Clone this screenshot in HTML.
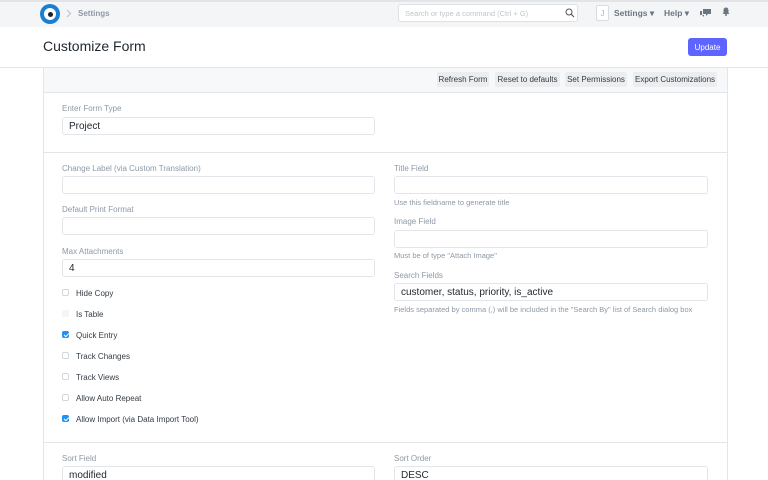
<!DOCTYPE html>
<html><head><meta charset="utf-8"><style>
*{box-sizing:border-box;margin:0;padding:0}
html,body{width:768px;height:480px;overflow:hidden}
body{background:#fff;font-family:"Liberation Sans",sans-serif;position:relative;color:#333c44}
.a{position:absolute}
.nav{left:0;top:0;width:768px;height:27px;background:#f4f5f7;border-top:2px solid #e2e4e7}
.lbl{position:absolute;font-size:8px;color:#8d99a6}
.inp{position:absolute;height:18px;border:1px solid #e2e6ea;border-radius:3px;background:#fff;font-size:10px;color:#1f272e;padding:3px 0 0 6px}
.help{position:absolute;font-size:7.5px;color:#8d99a6}
.cb{position:absolute;left:62px;width:7px;height:7px;border:1px solid #d1d8dd;border-radius:2px;background:#fff}
.cb.on{background:#2490ef;border-color:#2490ef}
.cb.on:after{content:"";position:absolute;left:1.5px;top:0px;width:2px;height:4px;border:solid #fff;border-width:0 1px 1px 0;transform:rotate(45deg)}
.cbl{position:absolute;left:76px;font-size:8px;color:#333c44}
.tb{position:absolute;top:72px;height:15px;background:#ebedef;font-size:8px;color:#333c44;padding-top:3px;text-align:center;border-radius:2px;white-space:nowrap}
</style></head><body>
<div class="a nav"></div>
<div class="a" style="left:40px;top:4px;width:20px;height:20px;border-radius:50%;background:#1a7fd0"></div>
<div class="a" style="left:44px;top:8px;width:12px;height:12px;border-radius:50%;background:#fff"></div>
<div class="a" style="left:47.5px;top:11.5px;width:5px;height:5px;border-radius:50%;background:#222"></div>
<svg class="a" style="left:66px;top:9px" width="6" height="9" viewBox="0 0 6 9"><path d="M1 1l3.5 3.5L1 8" fill="none" stroke="#b8c2cc" stroke-width="1"/></svg>
<div class="a" style="left:78px;top:9px;font-size:8px;color:#8d99a6;font-weight:bold">Settings</div>
<div class="a" style="left:398px;top:4px;width:180px;height:18px;background:#fff;border:1px solid #dde1e5;border-radius:3px"></div>
<div class="a" style="left:405px;top:9px;font-size:7.5px;color:#c0c6cc">Search or type a command (Ctrl + G)</div>
<svg class="a" style="left:565px;top:8px" width="10" height="10" viewBox="0 0 10 10"><circle cx="4" cy="4" r="3" fill="none" stroke="#555" stroke-width="1"/><path d="M6.2 6.2L9 9" stroke="#555" stroke-width="1.1"/></svg>
<div class="a" style="left:596px;top:5px;width:13px;height:16px;border:1px solid #d8dcdf;border-radius:2px;background:#fff;font-size:8px;color:#b0b8c0;text-align:center;padding-top:3px">J</div>
<div class="a" style="left:614px;top:8px;font-size:8.5px;color:#6c7680;font-weight:bold">Settings ▾</div>
<div class="a" style="left:664px;top:8px;font-size:8.5px;color:#6c7680;font-weight:bold">Help ▾</div>
<svg class="a" style="left:700px;top:8px" width="11" height="9" viewBox="0 0 11 9"><path d="M3 1h8v5H8L6 8V6H3z" fill="#6c7680"/><path d="M0 3h2v4h2v2L2 7H0z" fill="#6c7680"/></svg>
<svg class="a" style="left:722px;top:7px" width="8" height="9" viewBox="0 0 8 9"><path d="M4 0.5C2 0.5 1.5 2 1.5 4V6L0.5 7H7.5L6.5 6V4C6.5 2 6 0.5 4 0.5z" fill="#6c7680"/><circle cx="4" cy="8" r="1" fill="#6c7680"/></svg>

<div class="a" style="left:43px;top:38px;font-size:14px;color:#1f272e">Customize Form</div>
<div class="a" style="left:688px;top:38px;width:39px;height:18px;background:#5e64ff;border-radius:3px;color:#fff;font-size:8px;text-align:center;padding-top:4.5px">Update</div>

<div class="a" style="left:0;top:67px;width:768px;height:1px;background:#e2e6ea"></div>
<div class="a" style="left:43px;top:67px;width:685px;height:420px;border-left:1px solid #e2e6ea;border-right:1px solid #e2e6ea"></div>
<div class="a" style="left:44px;top:68px;width:683px;height:25px;background:#f7f8fa;border-bottom:1px solid #e2e6ea"></div>
<div class="tb" style="left:437px;width:52px">Refresh Form</div>
<div class="tb" style="left:495px;width:65px">Reset to defaults</div>
<div class="tb" style="left:565px;width:62px">Set Permissions</div>
<div class="tb" style="left:633px;width:84px">Export Customizations</div>

<div class="lbl" style="left:62px;top:104px">Enter Form Type</div>
<div class="inp" style="left:62px;top:117px;width:313px">Project</div>
<div class="a" style="left:44px;top:152px;width:683px;height:1px;background:#e2e6ea"></div>

<div class="lbl" style="left:62px;top:164px">Change Label (via Custom Translation)</div>
<div class="inp" style="left:62px;top:176px;width:313px"></div>
<div class="lbl" style="left:62px;top:205px">Default Print Format</div>
<div class="inp" style="left:62px;top:217px;width:313px"></div>
<div class="lbl" style="left:62px;top:247px">Max Attachments</div>
<div class="inp" style="left:62px;top:259px;width:313px">4</div>

<div class="cb" style="top:289px"></div><div class="cbl" style="top:289px">Hide Copy</div>
<div class="cb" style="top:310px;background:#f4f5f6;border-color:#f4f5f6"></div><div class="cbl" style="top:310px">Is Table</div>
<div class="cb on" style="top:331px"></div><div class="cbl" style="top:331px">Quick Entry</div>
<div class="cb" style="top:352px"></div><div class="cbl" style="top:352px">Track Changes</div>
<div class="cb" style="top:373px"></div><div class="cbl" style="top:373px">Track Views</div>
<div class="cb" style="top:394px"></div><div class="cbl" style="top:394px">Allow Auto Repeat</div>
<div class="cb on" style="top:415px"></div><div class="cbl" style="top:415px">Allow Import (via Data Import Tool)</div>

<div class="lbl" style="left:394px;top:164px">Title Field</div>
<div class="inp" style="left:394px;top:176px;width:314px"></div>
<div class="help" style="left:394px;top:198px">Use this fieldname to generate title</div>
<div class="lbl" style="left:394px;top:217px">Image Field</div>
<div class="inp" style="left:394px;top:230px;width:314px"></div>
<div class="help" style="left:394px;top:251px">Must be of type "Attach Image"</div>
<div class="lbl" style="left:394px;top:271px">Search Fields</div>
<div class="inp" style="left:394px;top:283px;width:314px">customer, status, priority, is_active</div>
<div class="help" style="left:394px;top:305px">Fields separated by comma (,) will be included in the "Search By" list of Search dialog box</div>

<div class="a" style="left:44px;top:442px;width:683px;height:1px;background:#e2e6ea"></div>
<div class="lbl" style="left:62px;top:454px">Sort Field</div>
<div class="inp" style="left:62px;top:466px;width:313px">modified</div>
<div class="lbl" style="left:394px;top:454px">Sort Order</div>
<div class="inp" style="left:394px;top:466px;width:314px">DESC</div>
</body></html>
